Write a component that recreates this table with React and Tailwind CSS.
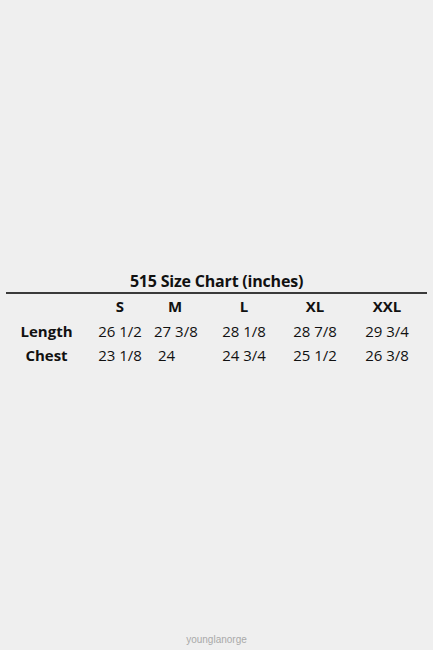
import React from "react";

const rows = [
  { label: "Length", vals: ["26 1/2", "27 3/8", "28 1/8", "28 7/8", "29 3/4"] },
  { label: "Chest", vals: ["23 1/8", "24", "24 3/4", "25 1/2", "26 3/8"] },
];
const sizes = ["S", "M", "L", "XL", "XXL"];

export default function App() {
  const cols = "grid grid-cols-[84px_60px_50px_88px_54px_90px]";
  return (
    <div
      className="w-[433px] h-[650px] bg-[#efefef] flex flex-col text-[#111]"
      style={{ fontFamily: "'Open Sans', 'Noto Sans', sans-serif" }}
    >
      <div className="pt-[270px] flex flex-col">
        <div className="text-center font-bold text-[16px] leading-[22px] tracking-[-0.2px]">
          515 Size Chart (inches)
        </div>
        <div className="mx-[6px] h-[2px] bg-[#3a3a3a]" />
        <div className={`${cols} ml-[6px] text-[15px] leading-[24.5px]`}>
          <div />
          {sizes.map((s) => (
            <div key={s} className="text-center font-bold">{s}</div>
          ))}
          {rows.map((r) => (
            <React.Fragment key={r.label}>
              <div className="text-center font-bold -ml-[3px]">{r.label}</div>
              {r.vals.map((v, i) => (
                <div key={i} className={`text-[15px] whitespace-nowrap ${i === 1 ? "text-left pl-[4px]" : "text-center"} ${i === 1 && v === "24" ? "pl-[8px]" : ""}`}>
                  {v}
                </div>
              ))}
            </React.Fragment>
          ))}
        </div>
      </div>
      <div className="mt-auto pb-[3px] text-center text-[10px] text-[#a9a9a9]" style={{ fontFamily: "'Liberation Sans', sans-serif" }}>
        younglanorge
      </div>
    </div>
  );
}
